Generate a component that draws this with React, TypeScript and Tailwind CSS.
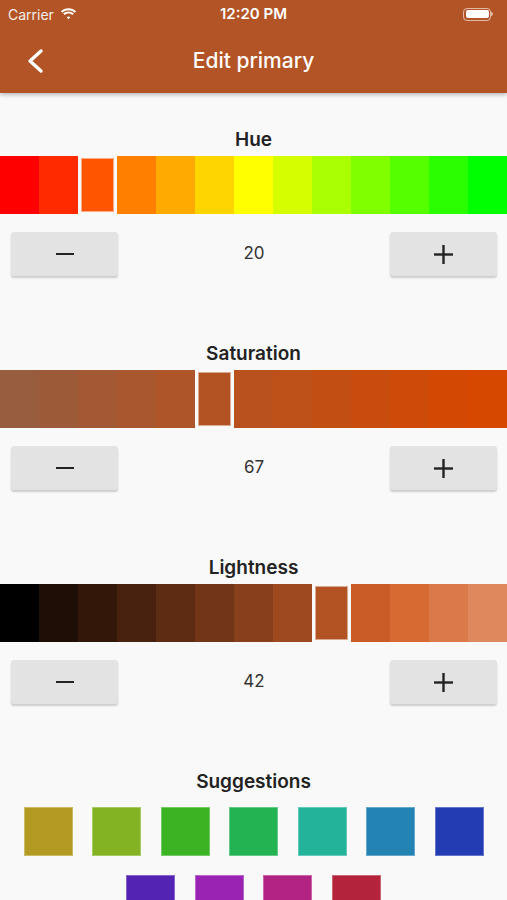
import React from "react";

const FONT = { fontFamily: "Inter, 'Noto Sans', sans-serif" };

const hsl = (h: number, s: number, l: number) => `hsl(${h} ${s}% ${l}%)`;

type Row = { title: string; value: number; colors: string[]; selected: number };

const range = (start: number, step: number, n: number) =>
  Array.from({ length: n }, (_, i) => start + i * step);

const rows: Row[] = [
  { title: "Hue", value: 20, selected: 2, colors: range(0, 10, 13).map((h) => hsl(h, 100, 50)) },
  {
    title: "Saturation",
    value: 67,
    selected: 5,
    colors: range(42, 5, 13).map((s) => hsl(20, Math.min(s, 100), 42)),
  },
  {
    title: "Lightness",
    value: 42,
    selected: 8,
    colors: range(2, 5, 13).map((l, i) => hsl(20, 67, i === 0 ? 0 : l)),
  },
];

const suggestions = range(50, 30, 11).map((h) => hsl(h % 360, 67, 42));

function StatusBar() {
  return (
    <div className="h-[28px] flex items-center justify-between px-[8px] text-white text-[14px]">
      <div className="flex items-center gap-[6px] w-[120px]">
        <span className="opacity-90">Carrier</span>
        <svg width="17" height="12" viewBox="0 0 17 12" fill="white">
          <path d="M8.5 2.2c2.4 0 4.6.9 6.3 2.5l1.3-1.4C14.1 1.4 11.4.3 8.5.3S2.9 1.4.9 3.3l1.3 1.4C3.9 3.1 6.1 2.2 8.5 2.2z" />
          <path d="M8.5 5.4c1.5 0 2.9.6 4 1.6l1.3-1.4C12.4 4.3 10.5 3.5 8.5 3.5S4.6 4.3 3.2 5.6L4.5 7c1.1-1 2.5-1.6 4-1.6z" />
          <path d="M8.5 8.5c.7 0 1.3.3 1.8.7L8.5 11.2 6.7 9.2c.5-.4 1.1-.7 1.8-.7z" />
        </svg>
      </div>
      <span className="font-semibold text-[15px]">12:20 PM</span>
      <div className="w-[120px] flex justify-end pr-[6px]">
        <div className="flex items-center">
          <div className="w-[28px] h-[13px] rounded-[4px] border border-white/60 p-[1.5px]">
            <div className="w-full h-full rounded-[2px] bg-white" />
          </div>
          <div className="w-[1.5px] h-[4px] bg-white/60 rounded-r-sm" />
        </div>
      </div>
    </div>
  );
}

function Bar({ colors, selected }: { colors: string[]; selected: number }) {
  return (
    <div className="grid grid-cols-[repeat(13,minmax(0,1fr))] h-[58px] w-full">
      {colors.map((c, i) =>
        i === selected ? (
          <div key={i} className="px-[3px] py-[2px]">
            <div className="w-full h-full border border-white/50" style={{ backgroundColor: c }} />
          </div>
        ) : (
          <div key={i} style={{ backgroundColor: c }} />
        )
      )}
    </div>
  );
}

function StepButton({ plus }: { plus?: boolean }) {
  return (
    <button
      type="button"
      className="w-[107px] h-[44px] rounded-[3px] bg-[#e3e3e3] shadow-[0_2px_2px_rgba(0,0,0,0.18)] flex items-center justify-center"
    >
      {plus ? (
        <svg width="19" height="19" viewBox="0 0 19 19" stroke="#222" strokeWidth="2.4">
          <line x1="9.5" y1="0" x2="9.5" y2="19" />
          <line x1="0" y1="9.5" x2="19" y2="9.5" />
        </svg>
      ) : (
        <div className="w-[18px] h-[2.5px] bg-[#222]" />
      )}
    </button>
  );
}

function Section({ row }: { row: Row }) {
  return (
    <div className="pt-[35px] mb-[31px]">
      <div className="h-[24px] leading-[24px] text-center text-[19px] font-semibold text-[#222]">{row.title}</div>
      <div className="mt-[4px]">
        <Bar colors={row.colors} selected={row.selected} />
      </div>
      <div className="mt-[18px] px-[11px] pr-[10px] flex items-center justify-between">
        <StepButton />
        <span className="text-[17px] text-[#333]">{row.value}</span>
        <StepButton plus />
      </div>
    </div>
  );
}

export default function App() {
  return (
    <div className="w-[507px] h-[900px] overflow-hidden bg-[#f9f9f9]" style={FONT}>
      <div className="bg-[#b25425] shadow-[0_2px_4px_rgba(0,0,0,0.25)] relative z-10">
        <StatusBar />
        <div className="h-[65px] flex items-center relative">
          <svg className="ml-[27px]" width="18" height="26" viewBox="0 0 18 26" fill="none" stroke="white" strokeWidth="3.4" strokeLinecap="round" strokeLinejoin="round">
            <polyline points="14,3 3,13 14,23" />
          </svg>
          <div className="absolute inset-0 flex items-center justify-center text-white text-[21px] font-medium">
            Edit primary
          </div>
        </div>
      </div>
      {rows.map((r) => (
        <Section key={r.title} row={r} />
      ))}
      <div className="pt-[35px]">
        <div className="h-[24px] leading-[24px] text-center text-[19px] font-semibold text-[#222]">Suggestions</div>
        <div className="mt-[3px] px-[12px] flex flex-wrap justify-center">
          {suggestions.map((c, i) => (
            <div
              key={i}
              className="w-[49px] h-[49px] m-[9.75px] border border-white/30"
              style={{ backgroundColor: c }}
            />
          ))}
        </div>
      </div>
    </div>
  );
}
